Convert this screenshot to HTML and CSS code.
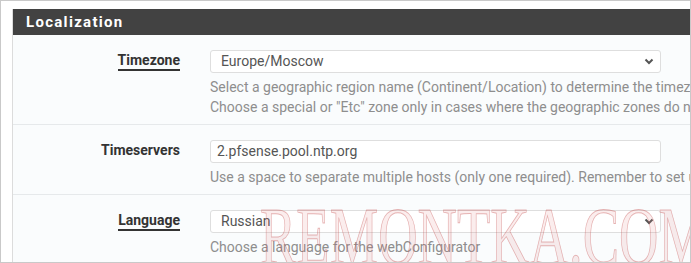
FILE: index.html
```html
<!DOCTYPE html>
<html lang="en">
<head>
    <meta charset="UTF-8">
    <title>System / General Setup</title>
    <link rel="stylesheet" href="styles.css">
</head>
<body>
    <div class="frame">
        <div class="panel">
            <div class="panel-heading">
                <h2>Localization</h2>
            </div>
            <div class="panel-body">
                <div class="form-row first">
                    <div class="label-cell"><span class="form-label underlined">Timezone</span></div>
                    <div class="form-control">
                        <div class="select-box">
                            <span>Europe/Moscow</span>
                            <svg class="caret" width="10" height="7" viewBox="0 0 10 7"><path d="M1.5 1.5 L5 5 L8.5 1.5" fill="none" stroke="#555" stroke-width="2"/></svg>
                        </div>
                        <p class="help">Select a geographic region name (Continent/Location) to determine the timezone for the firewall.<br>Choose a special or "Etc" zone only in cases where the geographic zones do not properly handle the clock offset required for this firewall.</p>
                    </div>
                </div>
                <div class="form-row">
                    <div class="label-cell"><span class="form-label">Timeservers</span></div>
                    <div class="form-control">
                        <div class="input-box">2.pfsense.pool.ntp.org</div>
                        <p class="help">Use a space to separate multiple hosts (only one required). Remember to set up at least one DNS server if a host name is entered here!</p>
                    </div>
                </div>
                <div class="form-row">
                    <div class="label-cell"><span class="form-label underlined">Language</span></div>
                    <div class="form-control">
                        <div class="select-box">
                            <span>Russian</span>
                            <svg class="caret" width="10" height="7" viewBox="0 0 10 7"><path d="M1.5 1.5 L5 5 L8.5 1.5" fill="none" stroke="#555" stroke-width="2"/></svg>
                        </div>
                        <p class="help">Choose a language for the webConfigurator</p>
                    </div>
                </div>
            </div>
        </div>
        <div class="watermark">REMONTKA.COM</div>
    </div>
</body>
</html>
```

FILE: styles.css
```css
body {
    margin: 0;
    font-family: Roboto, "Liberation Sans", sans-serif;
    background-color: #fff;
    color: #333;
}
.frame {
    position: relative;
    width: 689px;
    height: 261px;
    border: 1px solid #c9c9c9;
    overflow: hidden;
    background-color: #fff;
}
.panel {
    margin: 8px 0 0 11px;
    width: 900px;
    border-left: 1px solid #dcdcdc;
    background-color: #fafcfd;
}
.panel-heading {
    background-color: #424242;
    height: 26px;
    padding-left: 13px;
}
.panel-heading h2 {
    margin: 0;
    color: #fff;
    font-size: 15px;
    font-weight: bold;
    letter-spacing: 1.3px;
    line-height: 27px;
}
.form-row {
    display: grid;
    grid-template-columns: 167px 1fr;
    column-gap: 30px;
    padding: 15px 0 7px;
    border-bottom: 1px solid #e6e9eb;
}
.form-row.first {
    padding-top: 15px;
}
.label-cell {
    text-align: right;
}
.form-label {
    display: inline-block;
    font-size: 14px;
    font-weight: bold;
    color: #333;
    line-height: 18px;
}
.form-label.underlined {
    line-height: 17px;
    border-bottom: 2px solid #333;
}
.select-box, .input-box {
    box-sizing: border-box;
    width: 451px;
    height: 23px;
    border: 1px solid #dedede;
    border-radius: 3px;
    background-color: #fff;
    font-size: 14px;
    color: #555;
    line-height: 21px;
}
.select-box {
    display: flex;
    justify-content: space-between;
    align-items: center;
    padding: 0 6px 0 10px;
}
.input-box {
    padding-left: 6px;
}
.caret {
    display: block;
}
.help {
    margin: 4px 0 0;
    font-size: 14px;
    line-height: 20px;
    color: #8e8e8e;
    white-space: nowrap;
}
.watermark {
    position: absolute;
    left: 259px;
    top: 195px;
    font-family: "Liberation Serif", serif;
    font-size: 82px;
    line-height: 82px;
    color: rgba(225, 130, 130, 0.14);
    -webkit-text-stroke: 1px rgba(195, 70, 70, 0.38);
    transform: scaleX(0.665);
    transform-origin: left top;
    pointer-events: none;
}
```
